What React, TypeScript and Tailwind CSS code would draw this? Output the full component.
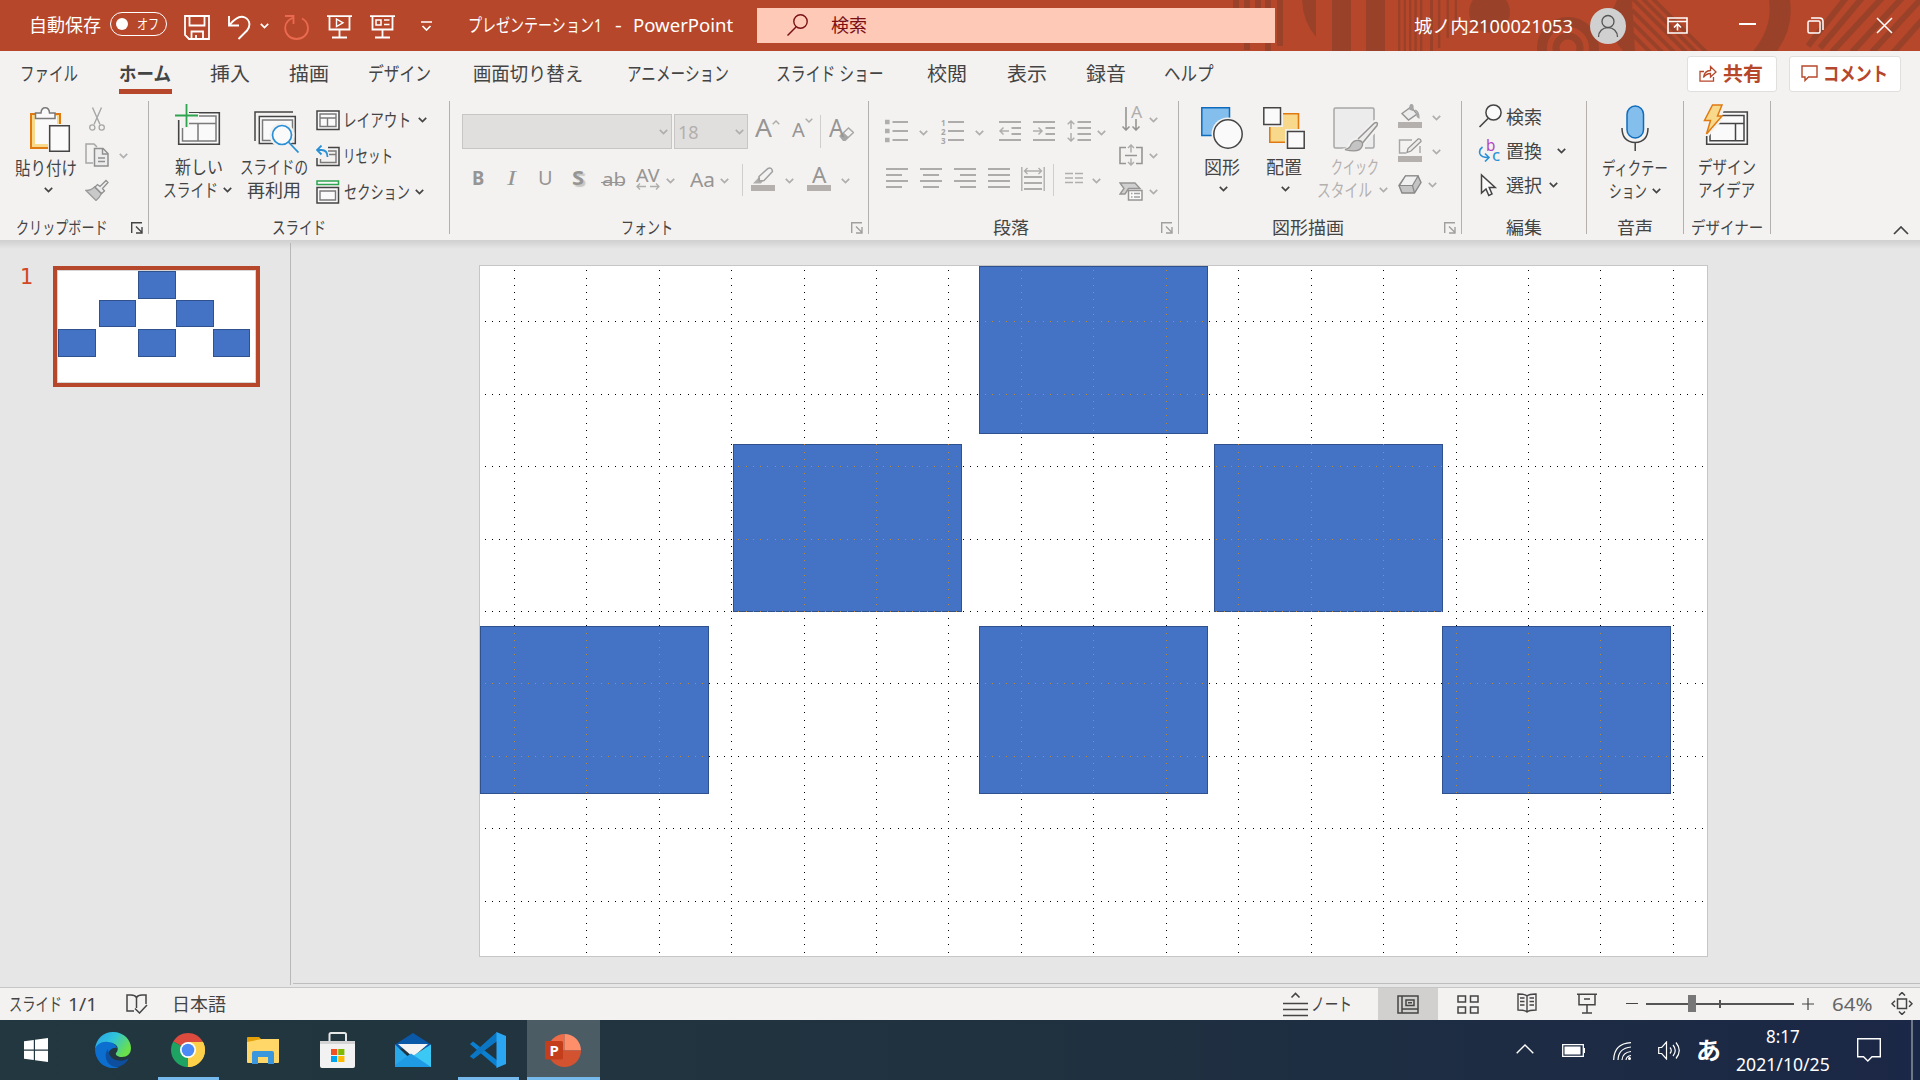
import React, { useLayoutEffect, useRef, useState } from "react";

/* Text squeezed or stretched horizontally to a given width, like the narrow kana of a UI font. */
function T({ w, className = "", children }: { w: number; className?: string; children: React.ReactNode }) {
  const ref = useRef<HTMLSpanElement>(null);
  const [scale, setScale] = useState(1);
  useLayoutEffect(() => {
    if (ref.current) setScale(w / ref.current.offsetWidth);
  }, [w]);
  return (
    <span className={"block shrink-0 whitespace-nowrap leading-none " + className} style={{ width: w }}>
      <span ref={ref} className="inline-block origin-left" style={{ transform: `scaleX(${scale})` }}>
        {children}
      </span>
    </span>
  );
}

function Ico({ w, h, className = "", children }: { w: number; h: number; className?: string; children: React.ReactNode }) {
  return (
    <svg width={w} height={h} viewBox={`0 0 ${w} ${h}`} fill="none" className={"block shrink-0 " + className}>
      {children}
    </svg>
  );
}

function Chev({ className = "text-[#444]" }: { className?: string }) {
  return (
    <Ico w={9} h={6} className={className}>
      <path d="M0.8 0.8 4.5 4.5 8.2 0.8" stroke="currentColor" strokeWidth="1.7" />
    </Ico>
  );
}

function Launcher({ className = "" }: { className?: string }) {
  return (
    <Ico w={12} h={12} className={className}>
      <path d="M.7 11V.7H11M5 4.5l5.5 5.5M11 5v6H5" stroke="currentColor" strokeWidth="1.4" />
    </Ico>
  );
}

const Divider = () => <div className="mt-[5px] h-[133px] w-px shrink-0 bg-[#b3b0ad]" />;

/* ---------- Title bar ---------- */

function TitleArt() {
  return (
    <svg className="absolute inset-0" width="1920" height="51" viewBox="0 0 1920 51">
      <g fill="#9a4229">
        <path d="M1233 0h6v8h-6zM1244 0h6v50h-6zM1255 0h6v8h-6zM1265 0h6v51h-6zM1277 0h6v46h-6z" />
        <path d="M1302 0h14v37Q1303 22 1302 0zM1332 0h19v51h-19zM1366 0h19v51h-19z" />
        <path d="M1398 0h2.4v51h-2.4zM1403.6 0h2.4v51h-2.4zM1409 0h2.4v51h-2.4zM1414.4 0h2.4v51h-2.4zM1420 0h2.4v51h-2.4zM1430 0h3v51h-3zM1438 0h2.4v48h-2.4zM1446.500 0h2.4v38h-2.4zM1454.700 0h2.4v28h-2.4z" />
        <circle cx="1489.500" cy="12" r="20.500" />
      </g>
      <circle cx="1568" cy="48" r="26" stroke="#9a4229" strokeWidth="10" fill="none" />
      <circle cx="1568" cy="48" r="12" stroke="#9a4229" strokeWidth="7" fill="none" />
      <path d="M1617 0Q1603 28 1623 51h12L1632 0z" fill="#9a4229" />
      <g stroke="#9a4229" strokeWidth="4">
        <path d="M1632-2l54 54M1642-2l54 54M1652-2l54 54M1632 10l44 44M1632 22l32 32M1632 34l20 20" />
      </g>
      <path d="M1769 0h21q4 28-13 51h-24q20-24 16-51z" fill="#9a4229" />
      <g stroke="#9a4229" strokeWidth="6">
        <path d="M1846-2l-38 48M1862-2l-42 50M1882-2l-50 54M1902-2l-50 54M1922-2l-50 54M1940 0l-48 54" />
      </g>
    </svg>
  );
}

function TitleBar() {
  return (
    <header className="relative h-[51px] shrink-0 bg-[#b7472a] text-white">
      <TitleArt />
      <div className="relative flex h-[51px] items-center">
        <T w={72} className="ml-[29px] -mt-[2px] text-[18px]">自動保存</T>
        <div className="ml-[9px] mb-[3px] flex h-6 w-[57px] shrink-0 items-center rounded-full border border-white pl-[5px]">
          <span className="h-3 w-3 rounded-full bg-white" />
          <T w={22} className="ml-[9px] text-[14px]">オフ</T>
        </div>
        <Ico w={26} h={25} className="ml-[17px] mt-[3px]">
          <path d="M1 1h24v23H5l-4-4zM5.500 1v9.500h15V1M7.500 24v-7.500h11.500V24M12 24v-4" stroke="#fff" strokeWidth="1.8" />
        </Ico>
        <Ico w={23} h={25} className="ml-[18px] mt-[3px]">
          <path d="M1 1v9.500h10M1.500 10C8 2 13 .5 17 2.500c5.500 3 5.500 9 2 13L10.500 24" stroke="#fff" strokeWidth="1.9" />
        </Ico>
        <Chev className="ml-[9px] text-white" />
        <Ico w={26} h={25} className="ml-[15px] mt-[3px]">
          <path d="M1 1h8.500v8M9.500 2.500C3 5 1 9 1.200 13.500c.3 6 5 10.500 11.300 10.500s11.500-4.500 11.500-10.500c0-4.500-2-8-6-10" stroke="#ea6a50" strokeWidth="1.8" />
        </Ico>
        <Ico w={25} h={24} className="ml-[17px] mt-[2px]">
          <path d="M0 1.200h25M2.500 1.200v13.300h20V1.200M12.500 14.500V22M5 22.500h15" stroke="#fff" strokeWidth="1.8" />
          <path d="M9.500 4l6.500 3.800-6.500 3.800z" stroke="#fff" strokeWidth="1.400" />
        </Ico>
        <Ico w={25} h={24} className="ml-[18px] mt-[2px]">
          <path d="M0 1.200h25M2.500 1.200v13.300h20V1.200M12.500 14.500V22M5 22.500h15" stroke="#fff" strokeWidth="1.8" />
          <path d="M6 5h5v5H6zM14 5h5.500M14 9.500h5.500" stroke="#fff" strokeWidth="1.500" />
        </Ico>
        <Ico w={11} h={10} className="ml-[26px]">
          <path d="M0 1h11M1.500 5l4 4 4-4" stroke="#fff" strokeWidth="1.7" />
        </Ico>
        <T w={134} className="ml-[36px] -mt-[2px] text-[18px]">プレゼンテーション1</T>
        <T w={7} className="ml-[13px] -mt-[2px] text-[18px]">-</T>
        <T w={100} className="ml-[11px] -mt-[2px] text-[18px]">PowerPoint</T>
        <div className="ml-[24px] flex h-[35px] w-[518px] shrink-0 items-center bg-[#fec9b6] text-[#7a1016]">
          <Ico w={21} h={22} className="ml-[30px] -mt-px">
            <circle cx="13.500" cy="7.500" r="6.700" stroke="currentColor" strokeWidth="1.400" />
            <path d="M9 13L.5 21.500" stroke="currentColor" strokeWidth="1.500" />
          </Ico>
          <T w={36} className="ml-[23px] -mt-[2px] text-[18px]">検索</T>
        </div>
        <T w={159} className="ml-[139px] mt-[1px] text-[18px]">城ノ内2100021053</T>
        <div className="ml-[17px] flex h-9 w-9 shrink-0 items-center justify-center rounded-full bg-[#d0d0d0]">
          <Ico w={22} h={24}>
            <circle cx="11" cy="7.500" r="6" stroke="#555" strokeWidth="1.300" />
            <path d="M1.500 23c0-5.500 4-9.300 9.500-9.300s9.500 3.800 9.500 9.300" stroke="#555" strokeWidth="1.300" />
          </Ico>
        </div>
        <Ico w={21} h={17} className="ml-[41px]">
          <path d="M1 1h19v15H1zM1 4.500h19M10.500 13.500v-6M7 10.500L10.500 7l3.500 3.500" stroke="#fff" strokeWidth="1.600" />
        </Ico>
        <div className="ml-[51px] mb-[3px] h-[1.5px] w-[17px] bg-white" />
        <Ico w={17} h={17} className="ml-[51px] -mt-px">
          <rect x="1" y="4" width="12" height="12" rx="1.500" stroke="#fff" strokeWidth="1.500" />
          <path d="M4 1h8.500Q16 1 16 4.500V13" stroke="#fff" strokeWidth="1.500" />
        </Ico>
        <Ico w={17} h={17} className="ml-[52px] -mt-px">
          <path d="M1 1l15 15M16 1L1 16" stroke="#fff" strokeWidth="1.500" />
        </Ico>
      </div>
    </header>
  );
}

/* ---------- Tabs ---------- */

function Tabs() {
  return (
    <nav className="flex h-[45px] shrink-0 items-center text-[19.5px] text-[#444]">
      <T w={58} className="ml-[20px]">ファイル</T>
      <div className="ml-[41px] flex h-[45px] w-[53px] shrink-0 flex-col">
        <T w={52} className="mt-[13px] font-bold">ホーム</T>
        <div className="mt-[5px] h-[5px] w-[53px] bg-[#b7472a]" />
      </div>
      <T w={40} className="ml-[38px]">挿入</T>
      <T w={40} className="ml-[39px]">描画</T>
      <T w={63} className="ml-[39px]">デザイン</T>
      <T w={110} className="ml-[42px]">画面切り替え</T>
      <T w={102} className="ml-[44px]">アニメーション</T>
      <T w={108} className="ml-[47px]">スライド ショー</T>
      <T w={40} className="ml-[43px]">校閲</T>
      <T w={40} className="ml-[40px]">表示</T>
      <T w={40} className="ml-[39px]">録音</T>
      <T w={50} className="ml-[38px]">ヘルプ</T>
      <button className="ml-[473px] flex h-9 w-[90px] shrink-0 items-center rounded-[3px] border border-[#e1dfdd] bg-white text-[#b7472a]">
        <Ico w={18} h={17} className="ml-[11px]">
          <path d="M5 6.500H1v9.700h13.500V12M4.500 12.500c.5-4.500 3-6.800 7-7V1.500L17 7l-5.500 5V8.500c-3 0-5 1-7 4z" stroke="currentColor" strokeWidth="1.300" />
        </Ico>
        <T w={40} className="ml-[6px] font-bold">共有</T>
      </button>
      <button className="ml-[12px] flex h-9 w-[112px] shrink-0 items-center rounded-[3px] border border-[#e1dfdd] bg-white text-[#b7472a]">
        <Ico w={17} h={17} className="ml-[11px]">
          <path d="M1 1h15v11H7.500L4 15.500V12H1z" stroke="currentColor" strokeWidth="1.400" />
        </Ico>
        <T w={65} className="ml-[5px] font-bold">コメント</T>
      </button>
    </nav>
  );
}

/* ---------- Ribbon ---------- */

function ClipboardGroup() {
  return (
    <section className="flex w-[148px] shrink-0 flex-col">
      <div className="flex h-[120px]">
        <div className="flex w-[80px] flex-col">
          <Ico w={42} h={46} className="ml-[29px] mt-[11px]">
            <path d="M2 7h29v34H2z" fill="#f8d98c" stroke="#e07a10" strokeWidth="2" />
            <path d="M6 9h22v28H6z" fill="#fafafa" />
            <path d="M6.500 11.500V6h5.500c.5-7 8-7 8.500 0H26v5.500z" fill="#fafafa" stroke="#7a7a7a" strokeWidth="1.500" />
            <path d="M19 17h23v29H19z" fill="#f3f2f1" />
            <path d="M20.700 18.700h19.600v25.600H20.700z" fill="#fafafa" stroke="#444" strokeWidth="1.500" />
          </Ico>
          <T w={62} className="ml-[15px] mt-[6px] text-[18px]">貼り付け</T>
          <Chev className="ml-[44px] mt-[10px] text-[#444]" />
        </div>
        <div className="flex flex-col text-[#a6a6a6]">
          <Ico w={16} h={24} className="ml-[9px] mt-[11px]">
            <path d="M3.500.5l7.500 17M12.500.5L5 17.500" stroke="currentColor" strokeWidth="1.400" />
            <circle cx="3.300" cy="20.500" r="2.600" stroke="currentColor" strokeWidth="1.300" />
            <circle cx="12.700" cy="20.500" r="2.600" stroke="currentColor" strokeWidth="1.300" />
          </Ico>
          <div className="ml-[5px] mt-3 flex items-center">
            <Ico w={24} h={24}>
              <path d="M8 20H1V1h8l3 3" stroke="currentColor" strokeWidth="1.500" />
              <path d="M9.500 5.500h8.500l5 5v12.500H9.500z" fill="#ececec" stroke="#8f8f8f" strokeWidth="1.500" />
              <path d="M17.500 5.500V11H23M13 15h7M13 18.500h7" stroke="#8f8f8f" strokeWidth="1.400" />
            </Ico>
            <Chev className="ml-[10px] mt-[2px] text-[#b0b0b0]" />
          </div>
          <Ico w={24} h={22} className="ml-[5px] mt-3">
            <path d="M1 11.500c3 0 6-1 8.500-3.500l7 6.500c-1.500 3-3 5-5.500 7z" fill="#c9c9c9" stroke="#9a9a9a" strokeWidth="1.300" />
            <path d="M10 8l2.500-2.500 2.500 2L21 1.500l2 2-5.500 6 2 2.500-3 2.500z" fill="#ececec" stroke="#8f8f8f" strokeWidth="1.300" />
          </Ico>
        </div>
      </div>
      <div className="flex h-6 items-center text-[17.5px]">
        <T w={92} className="ml-[16px]">クリップボード</T>
        <Launcher className="ml-[23px] text-[#444]" />
      </div>
    </section>
  );
}

function SlidesGroup() {
  return (
    <section className="flex w-[300px] shrink-0 flex-col">
      <div className="flex h-[120px] text-[18px]">
        <div className="ml-[14px] flex w-[70px] flex-col">
          <Ico w={46} h={42} className="ml-3 mt-[8px]">
            <path d="M3.700 8.700h40.600v31.600H3.700z" fill="#fafafa" stroke="#444" strokeWidth="1.600" />
            <path d="M7.500 12h33.500v25H7.500zM7.500 19.500H41M23 19.500V37" stroke="#7a7a7a" strokeWidth="1.500" />
            <path d="M0 6h10V0h4v9h10v7H14v8H6v-8H0z" fill="#f3f2f1" />
            <path d="M0 11.500h23M11.500 0v23" stroke="#2ea44f" strokeWidth="1.800" />
          </Ico>
          <T w={48} className="ml-[12px] mt-[12px]">新しい</T>
          <div className="mt-[5px] flex items-center">
            <T w={55}>スライド</T>
            <Chev className="ml-[5px] text-[#444]" />
          </div>
        </div>
        <div className="ml-[7px] flex w-[69px] flex-col">
          <Ico w={46} h={42} className="ml-[14px] mt-[15px]">
            <path d="M1 30V1h38" stroke="#444" strokeWidth="1.500" />
            <path d="M5.300 5.500h36v27h-36z" fill="#fafafa" stroke="#444" strokeWidth="1.500" />
            <path d="M8.500 9h30v20.500h-30z" stroke="#7a7a7a" strokeWidth="1.500" />
            <circle cx="28" cy="24" r="12.500" fill="#f3f2f1" />
            <circle cx="28" cy="24" r="9.500" fill="#fafafa" stroke="#2a90d6" strokeWidth="1.700" />
            <path d="M34.500 31l10 10.500" stroke="#2a90d6" strokeWidth="1.800" />
          </Ico>
          <T w={68} className="mt-[5px]">スライドの</T>
          <T w={54} className="ml-[7px] mt-[5px]">再利用</T>
        </div>
        <div className="ml-[7px] mt-[12px] flex flex-col">
          <div className="flex h-6 items-center">
            <Ico w={24} h={21}>
              <path d="M1 1h22v18.500H1z" fill="#fafafa" stroke="#444" strokeWidth="1.500" />
              <path d="M4 4h16v12.500H4zM4 8h16M11.500 8v8.500" stroke="#7a7a7a" strokeWidth="1.400" />
            </Ico>
            <T w={68} className="ml-[3px]">レイアウト</T>
            <Chev className="ml-[7px] text-[#444]" />
          </div>
          <div className="mt-3 flex h-6 items-center">
            <Ico w={24} h={22}>
              <path d="M12 2.500h11v18H1V13" stroke="#444" strokeWidth="1.500" />
              <path d="M12 6h8v11.500H4.500V14M13 9.500h7" stroke="#7a7a7a" strokeWidth="1.400" />
              <path d="M5.500.5L1 5l4.500 4.500M1 5h4.500q6 0 6 7" stroke="#2a90d6" strokeWidth="1.800" />
            </Ico>
            <T w={50} className="ml-[3px]">リセット</T>
          </div>
          <div className="mt-3 flex h-6 items-center">
            <Ico w={24} h={24}>
              <path d="M1 1h21.500v3.500H1z" fill="#fafafa" stroke="#2ea44f" strokeWidth="1.500" />
              <path d="M1 7.500h21.500V23H1z" fill="#fafafa" stroke="#444" strokeWidth="1.500" />
              <path d="M4 11h15.500v9H4z" stroke="#7a7a7a" strokeWidth="1.400" />
            </Ico>
            <T w={66} className="ml-[4px]">セクション</T>
            <Chev className="ml-[5px] text-[#444]" />
          </div>
        </div>
      </div>
      <div className="flex h-6 items-center text-[17.5px]">
        <T w={54} className="ml-[123px]">スライド</T>
      </div>
    </section>
  );
}

function FontGroup() {
  return (
    <section className="flex w-[418px] shrink-0 flex-col">
      <div className="h-[120px] text-[#979593]">
        <div className="mt-[18px] flex h-[35px] items-center">
          <div className="ml-[12px] flex h-[35px] w-[210px] shrink-0 items-center justify-end border border-[#c8c6c4] bg-[#e1dfdd] pr-[3px]">
            <Chev className="text-[#b0aeac]" />
          </div>
          <div className="ml-[2px] flex h-[35px] w-[74px] shrink-0 items-center border border-[#c8c6c4] bg-[#e1dfdd] pl-[3px]">
            <T w={21} className="text-[18px] text-[#b3b0ad]">18</T>
            <Chev className="ml-[36px] text-[#b0aeac]" />
          </div>
          <div className="ml-[7px] mb-[8px] flex w-6">
            <T w={17} className="text-[25px]">A</T>
            <Ico w={8} h={5} className="mt-[5px]"><path d="M.7 4.300L4 1l3.300 3.300" stroke="#b0aeac" strokeWidth="1.500" /></Ico>
          </div>
          <div className="ml-[13px] mb-[7px] flex w-[21px]">
            <T w={13} className="mt-[4px] text-[20px]">A</T>
            <Ico w={8} h={5} className="mt-[2px]"><path d="M.7.700L4 4l3.300-3.300" stroke="#b0aeac" strokeWidth="1.500" /></Ico>
          </div>
          <div className="ml-[7px] h-[33px] w-px bg-[#d0cecc]" />
          <div className="ml-[8px] mb-[8px] flex w-[25px]">
            <T w={15} className="text-[25px]">A</T>
            <Ico w={15} h={14} className="-ml-[5px] mt-[12px]">
              <path d="M1 9L9.500 1l5 4.500L6 13.500H4.500z" fill="#f3f2f1" stroke="#a6a6a6" strokeWidth="1.400" />
              <path d="M1 9l3.500-3.500 5 4.500L6 13.500H4.500z" fill="#a6a6a6" />
            </Ico>
          </div>
        </div>
        <div className="mt-[15px] flex h-8 items-center pb-[4px]">
          <T w={12} className="ml-[22px] text-[20px] font-bold">B</T>
          <T w={9} className="ml-[23px] font-['Liberation_Serif',serif] text-[21px] italic">I</T>
          <T w={15} className="ml-[22px] text-[20px] underline underline-offset-4">U</T>
          <T w={12} className="ml-[19px] text-[20px] font-bold [text-shadow:2px_2px_1px_#c8c6c4]">S</T>
          <div className="relative ml-[17px] mt-[1px]">
            <T w={24} className="px-[1px] text-[18px]">ab</T>
            <div className="absolute left-0 top-[12px] h-px w-6 bg-[#979593]" />
          </div>
          <div className="ml-[11px] flex w-6 flex-col">
            <T w={24} className="text-[18px]">AV</T>
            <Ico w={24} h={7} className="-mt-px"><path d="M4 .5L1 3.500l3 3M1 3.500h9M20 .5l3 3-3 3M23 3.500h-9" stroke="#b0aeac" strokeWidth="1.300" /></Ico>
          </div>
          <Chev className="ml-[6px] mt-[6px] text-[#b0aeac]" />
          <T w={25} className="ml-[15px] mt-[3px] text-[20px]">Aa</T>
          <Chev className="ml-[5px] mt-[6px] text-[#b0aeac]" />
          <div className="ml-[13px] mt-[4px] h-8 w-px shrink-0 bg-[#d0cecc]" />
          <Ico w={24} h={24} className="ml-[8px] mt-[2px]">
            <path d="M2 16.500L8 10l4 4-2 2.500z" fill="#b0aeac" />
            <path d="M8 9.500L17 1.500q4-1.500 4.500 3L13 13.500 8.500 14z" fill="#f3f2f1" stroke="#a0a0a0" strokeWidth="1.500" />
            <path d="M0 18h24v6H0z" fill="#b3b0ad" />
          </Ico>
          <Chev className="ml-[10px] mt-[6px] text-[#b0aeac]" />
          <div className="ml-[13px] mt-[2px] flex w-6 flex-col items-center">
            <T w={14} className="-mt-[2px] h-[18px] text-[21px]">A</T>
            <div className="mt-[2px] h-[6px] w-6 bg-[#b3b0ad]" />
          </div>
          <Chev className="ml-[10px] mt-[6px] text-[#b0aeac]" />
        </div>
      </div>
      <div className="flex h-6 items-center text-[17.5px]">
        <T w={52} className="ml-[171px]">フォント</T>
        <Launcher className="ml-[178px] text-[#a19f9d]" />
      </div>
    </section>
  );
}

function ParagraphGroup() {
  return (
    <section className="flex w-[309px] shrink-0 flex-col">
      <div className="flex h-[120px] text-[#979593]">
        <div className="w-[237px]">
          <div className="mt-[18px] flex h-[35px] items-center">
            <Ico w={24} h={24} className="ml-[16px] -mt-[2px]">
              <path d="M7.500 3H23M7.500 12H23M7.500 21H23" stroke="currentColor" strokeWidth="1.500" />
              <path d="M0 .7h4.600v4.600H0zM0 9.700h4.600v4.600H0zM0 18.700h4.600v4.600H0z" fill="#b0aeac" />
            </Ico>
            <Chev className="ml-[10px] mt-[3px] text-[#b0aeac]" />
            <div className="ml-[13px] -mt-px flex w-6">
              <div className="flex w-[5px] flex-col text-[8px] font-bold leading-[9px] text-[#a8a6a4]">
                <span>1</span><span>2</span><span>3</span>
              </div>
              <Ico w={16} h={24} className="ml-[2px] mt-[1px]"><path d="M0 3h16M0 12h16M0 21h16" stroke="currentColor" strokeWidth="1.500" /></Ico>
            </div>
            <Chev className="ml-[10px] mt-[3px] text-[#b0aeac]" />
            <Ico w={22} h={20} className="ml-[15px] -mt-[2px]">
              <path d="M0 1h22M12.500 7H22M12.500 13H22M0 19h22" stroke="currentColor" strokeWidth="1.500" />
              <path d="M10 10H1M4.500 6.500L1 10l3.500 3.500" stroke="#b0aeac" strokeWidth="1.500" />
            </Ico>
            <Ico w={22} h={20} className="ml-[12px] -mt-[2px]">
              <path d="M0 1h22M12.500 7H22M12.500 13H22M0 19h22" stroke="currentColor" strokeWidth="1.500" />
              <path d="M0 10h9M5.500 6.500L9 10l-3.500 3.500" stroke="#b0aeac" strokeWidth="1.500" />
            </Ico>
            <Ico w={24} h={22} className="ml-[12px] -mt-px">
              <path d="M10.500 2H24M10.500 8H24M10.500 14H24M10.500 20H24" stroke="currentColor" strokeWidth="1.500" />
              <path d="M4 9V1M.7 4.300L4 1l3.300 3.300M4 13v8M.7 17.700L4 21l3.300-3.300" stroke="#b0aeac" strokeWidth="1.500" />
            </Ico>
            <Chev className="ml-[6px] mt-[3px] text-[#b0aeac]" />
          </div>
          <div className="mt-[15px] flex h-8 items-center pb-[4px]">
            <Ico w={22} h={20} className="ml-[17px]"><path d="M0 1h22M0 7h16M0 13h22M0 19h16" stroke="currentColor" strokeWidth="1.500" /></Ico>
            <Ico w={22} h={20} className="ml-[12px]"><path d="M0 1h22M3 7h16M0 13h22M3 19h16" stroke="currentColor" strokeWidth="1.500" /></Ico>
            <Ico w={22} h={20} className="ml-[12px]"><path d="M0 1h22M6 7h16M0 13h22M6 19h16" stroke="currentColor" strokeWidth="1.500" /></Ico>
            <Ico w={22} h={20} className="ml-[12px]"><path d="M0 1h22M0 7h22M0 13h22M0 19h22" stroke="currentColor" strokeWidth="1.500" /></Ico>
            <Ico w={24} h={24} className="ml-[11px] mt-[2px]">
              <path d="M.8 0v24M23.200 0v24" stroke="#b0aeac" strokeWidth="1.400" />
              <path d="M3 10h18M3 16h18M3 22h18" stroke="currentColor" strokeWidth="1.500" />
              <path d="M3.500 4h17M6.500 1l-3 3 3 3M17.500 1l3 3-3 3" stroke="#b0aeac" strokeWidth="1.400" />
            </Ico>
            <div className="ml-[8px] mt-[4px] h-8 w-px shrink-0 bg-[#d0cecc]" />
            <Ico w={18} h={12} className="ml-[11px]"><path d="M0 1.500h8M10 1.500h8M0 6h8M10 6h8M0 10.500h8M10 10.500h8" stroke="#b0aeac" strokeWidth="1.400" /></Ico>
            <Chev className="ml-[9px] mt-[6px] text-[#b0aeac]" />
          </div>
        </div>
        <div className="ml-[13px] mt-[11px] flex flex-col">
          <div className="flex h-6 items-center">
            <div className="relative h-6 w-6">
              <Ico w={24} h={24}>
                <path d="M7 0v23M3.500 19.500L7 23l3.500-3.500M17 12v11M13.500 19.500L17 23l3.500-3.500" stroke="currentColor" strokeWidth="1.600" />
              </Ico>
              <T w={11} className="absolute left-[12px] top-[-3px] text-[16px] text-[#b0aeac]">A</T>
            </div>
            <Chev className="ml-[6px] mt-[2px] text-[#b0aeac]" />
          </div>
          <div className="mt-3 flex h-6 items-center">
            <Ico w={24} h={22} className="-mt-px">
              <path d="M7 3.500H1v16h6M17 3.500h6v16h-6" stroke="currentColor" strokeWidth="1.600" />
              <path d="M6 11.500h12" stroke="currentColor" strokeWidth="1.500" />
              <path d="M12 8.500V1M9 4l3-3 3 3M12 14.500V21M9 18l3 3 3-3" stroke="#b0aeac" strokeWidth="1.500" />
            </Ico>
            <Chev className="ml-[6px] mt-[2px] text-[#b0aeac]" />
          </div>
          <div className="mt-3 flex h-6 items-center">
            <Ico w={24} h={19}>
              <path d="M1 1h15l5 5.500H9.500L6 12H1l4-5.500z" fill="#d0d0d0" stroke="currentColor" strokeWidth="1.400" />
              <path d="M9.500 8.500H23V18H9.500z" fill="#fafafa" stroke="currentColor" strokeWidth="1.500" />
              <path d="M12 11.500h1.500M12 15h1.500M15 11.500h6M15 15h6" stroke="#a0a0a0" strokeWidth="1.300" />
            </Ico>
            <Chev className="ml-[6px] mt-[2px] text-[#b0aeac]" />
          </div>
        </div>
      </div>
      <div className="flex h-6 items-center text-[17.5px]">
        <T w={36} className="ml-[124px]">段落</T>
        <Launcher className="ml-[132px] text-[#a19f9d]" />
      </div>
    </section>
  );
}

function DrawingGroup() {
  return (
    <section className="flex w-[282px] shrink-0 flex-col">
      <div className="flex h-[120px] text-[18px]">
        <div className="ml-[22px] mt-[11px] flex w-[42px] flex-col items-center">
          <Ico w={42} h={42}>
            <path d="M.8.800h27.700v27.700H.8z" fill="#83beec" stroke="#0f6cbd" strokeWidth="1.500" />
            <circle cx="27" cy="27" r="16.500" fill="#f3f2f1" />
            <circle cx="27" cy="27" r="14.200" fill="#fafafa" stroke="#444" strokeWidth="1.500" />
          </Ico>
          <T w={36} className="mt-[9px]">図形</T>
          <Chev className="ml-[3px] mt-[10px] text-[#444]" />
        </div>
        <div className="ml-5 mt-[11px] flex w-[42px] flex-col items-center">
          <Ico w={42} h={42}>
            <path d="M6.800 6.800H35.500v28.400H6.800z" fill="#f8d98c" stroke="#e07a10" strokeWidth="1.600" />
            <path d="M0 0h20v20H0zM22 22h20v20H22z" fill="#f3f2f1" />
            <path d="M.8.800h16.700v16.700H.8zM24.500 24.500h16.700v16.700H24.500z" fill="#fafafa" stroke="#444" strokeWidth="1.500" />
          </Ico>
          <T w={36} className="mt-[9px]">配置</T>
          <Chev className="ml-[3px] mt-[10px] text-[#444]" />
        </div>
        <div className="ml-[12px] mt-[11px] flex w-[71px] flex-col text-[#b3b0ad]">
          <Ico w={46} h={45} className="ml-[16px]">
            <path d="M2.500 1h37q1.500 0 1.500 1.500v37q0 1.500-1.500 1.500h-37Q1 41 1 39.500v-37Q1 1 2.500 1z" fill="#ececec" stroke="#a6a6a6" strokeWidth="1.500" />
            <path d="M9 42q6-1 6-5 2-5 8-6L41 13l5-1v10L32 37v8H9z" fill="#f3f2f1" />
            <path d="M25 32L41.500 16q4-1.500 2.500 2.500L29.500 36" fill="#ececec" stroke="#979593" strokeWidth="1.500" />
            <path d="M12 42.500q5-1 6-5 3-5 8-4t3 6q-3 7-17 3z" fill="#c4c4c4" stroke="#979593" strokeWidth="1.300" />
          </Ico>
          <T w={48} className="ml-[14px] mt-[6px]">クイック</T>
          <div className="mt-[5px] flex items-center">
            <T w={55}>スタイル</T>
            <Chev className="ml-[7px] text-[#b0aeac]" />
          </div>
        </div>
        <div className="ml-[10px] mt-[8px] flex flex-col">
          <div className="flex h-6 items-center">
            <Ico w={24} h={24}>
              <path d="M4 9.500L13 3l6 7-8.500 6z" fill="#ececec" stroke="#979593" strokeWidth="1.400" />
              <path d="M12 6V2q1.500-3 3 0v5M17 6q4 1 4 8-3-1-2-5" fill="#a6a6a6" stroke="#a6a6a6" strokeWidth="1.200" />
              <path d="M0 18h24v6H0z" fill="#b3b0ad" />
            </Ico>
            <Chev className="ml-[10px] mt-[3px] text-[#b0aeac]" />
          </div>
          <div className="mt-[10px] flex h-6 items-center">
            <Ico w={24} h={24}>
              <path d="M14 2H1.500v13H8M22 8v7" stroke="#a6a6a6" strokeWidth="1.400" />
              <path d="M9 14.500l1-4L20 1q3-.5 3 2.500L13 13z" fill="#ececec" stroke="#979593" strokeWidth="1.300" />
              <path d="M0 18h24v6H0z" fill="#b3b0ad" />
            </Ico>
            <Chev className="ml-[10px] mt-[4px] text-[#b0aeac]" />
          </div>
          <div className="mt-[10px] flex h-6 items-center">
            <Ico w={24} h={19}>
              <path d="M1 10.500L7.500 1H20l3 6.500L16.500 18H4z" fill="#c4c4c4" stroke="#888" strokeWidth="1.400" />
              <path d="M1.500 10.500L7.500 1H20l-5.500 9.500z" fill="#f0f0f0" stroke="#888" strokeWidth="1.200" />
              <path d="M14.500 10.500L16.500 18" stroke="#888" strokeWidth="1.200" />
            </Ico>
            <Chev className="ml-[6px] mt-[2px] text-[#b0aeac]" />
          </div>
        </div>
      </div>
      <div className="flex h-6 items-center text-[17.5px]">
        <T w={72} className="ml-[93px]">図形描画</T>
        <Launcher className="ml-[100px] text-[#a19f9d]" />
      </div>
    </section>
  );
}

function EditingGroup() {
  return (
    <section className="flex w-[124px] shrink-0 flex-col">
      <div className="flex h-[120px] flex-col gap-[10px] pt-[8px] text-[18px]">
        <div className="flex h-6 items-center">
          <Ico w={24} h={24} className="ml-[16px]">
            <circle cx="15.500" cy="8.500" r="7.600" fill="#fafafa" stroke="#444" strokeWidth="1.500" />
            <path d="M10 14.500L1.500 23" stroke="#444" strokeWidth="1.600" />
          </Ico>
          <T w={36} className="ml-[4px] mt-[1px]">検索</T>
        </div>
        <div className="flex h-6 items-center">
          <div className="relative ml-[16px] h-6 w-6">
            <Ico w={24} h={24}>
              <path d="M4.500 9q-4 3-2.500 7 1.500 3.500 8 3.500M7 15.500l4 4-4 4" stroke="#2a90d6" strokeWidth="1.600" />
            </Ico>
            <T w={9} className="absolute left-[8px] top-[-2px] text-[17px] text-[#b146c2]">b</T>
            <T w={8} className="absolute left-[14px] top-[8px] text-[17px] text-[#2a90d6]">c</T>
          </div>
          <T w={36} className="ml-[4px] mt-[1px]">置換</T>
          <Chev className="ml-[15px] mt-[2px] text-[#444]" />
        </div>
        <div className="flex h-6 items-center">
          <Ico w={24} h={24} className="ml-[16px] mt-[2px]">
            <path d="M3.500 2v18l4.500-4 2.800 6.500 3.200-1.500L11.200 14.500h6z" fill="#fafafa" stroke="#444" strokeWidth="1.500" />
          </Ico>
          <T w={36} className="ml-[4px] mt-[1px]">選択</T>
          <Chev className="ml-[7px] mt-[2px] text-[#444]" />
        </div>
      </div>
      <div className="flex h-6 items-center text-[17.5px]">
        <T w={36} className="ml-[44px]">編集</T>
      </div>
    </section>
  );
}

function VoiceGroup() {
  return (
    <section className="flex w-[96px] shrink-0 flex-col items-center">
      <div className="flex h-[120px] flex-col items-center text-[18px]">
        <Ico w={28} h={46} className="mt-[9px]">
          <rect x="6" y="1" width="16.500" height="32" rx="8.250" fill="#83beec" stroke="#0f6cbd" strokeWidth="1.500" />
          <path d="M1 23q0 14 13.200 14.500Q27 37 27 23M14.200 37.500V46" stroke="#444" strokeWidth="1.500" />
        </Ico>
        <T w={66} className="mt-[8px]">ディクテー</T>
        <div className="mt-[5px] flex items-center">
          <T w={38}>ション</T>
          <Chev className="ml-[5px] text-[#444]" />
        </div>
      </div>
      <div className="flex h-6 items-center text-[17.5px]">
        <T w={36}>音声</T>
      </div>
    </section>
  );
}

function DesignerGroup() {
  return (
    <section className="flex w-[86px] shrink-0 flex-col items-center">
      <div className="flex h-[120px] flex-col items-center pr-px text-[18px]">
        <Ico w={46} h={42} className="mr-[2px] mt-[8px]">
          <path d="M3.700 8h40.600v32.300H3.700z" fill="#fafafa" stroke="#444" strokeWidth="1.600" />
          <path d="M7 11.500h34v25.300H7zM7 19.500h34M32.500 19.500v17" stroke="#444" strokeWidth="1.500" />
          <path d="M2 6h19l-3 8h3L6 32H0z" fill="#f3f2f1" />
          <path d="M9.500 1H19l-4.500 11H19L3.500 30l4-13.500h-6z" fill="#f8d98c" stroke="#e07a10" strokeWidth="1.500" />
        </Ico>
        <T w={58} className="mt-[12px]">デザイン</T>
        <T w={57} className="mt-[5px]">アイデア</T>
      </div>
      <div className="flex h-6 items-center text-[17.5px]">
        <T w={72}>デザイナー</T>
      </div>
    </section>
  );
}

function Ribbon() {
  return (
    <div className="flex h-[144px] shrink-0">
      <ClipboardGroup />
      <Divider />
      <SlidesGroup />
      <Divider />
      <FontGroup />
      <Divider />
      <ParagraphGroup />
      <Divider />
      <DrawingGroup />
      <Divider />
      <EditingGroup />
      <Divider />
      <VoiceGroup />
      <Divider />
      <DesignerGroup />
      <Divider />
      <Ico w={16} h={9} className="ml-[122px] mt-[130px]">
        <path d="M1 8l7-7 7 7" stroke="#444" strokeWidth="1.700" />
      </Ico>
    </div>
  );
}

/* ---------- Slide workspace ---------- */

const SLIDE = { x: 480, y: 266, w: 1227, h: 690 };
const SHAPE = { w: 229, h: 168 };
const SHAPES = [
  [979, 266],
  [733, 444],
  [1214, 444],
  [480, 626],
  [979, 626],
  [1442, 626],
];

/* Dotted guide grid: fine dots along every tenth grid step. */
function gridPaths() {
  let dark = "";
  let light = "";
  const put = (x: number, y: number) => {
    if (x < SLIDE.x || x >= SLIDE.x + SLIDE.w || y < SLIDE.y || y >= SLIDE.y + SLIDE.h) return;
    const inside = SHAPES.some(([sx, sy]) => x >= sx && x < sx + SHAPE.w && y >= sy && y < sy + SHAPE.h);
    const d = `M${x - SLIDE.x} ${y - SLIDE.y}h1v1h-1z`;
    if (inside) light += d;
    else dark += d;
  };
  const gx = (k: number) => Math.round(948.4 + 7.245 * k);
  const gy = (k: number) => Math.round(321.2 + 7.245 * k);
  for (let i = -6; i <= 10; i++) for (let k = -7; k < 92; k++) put(gx(i * 10), gy(k));
  for (let j = 0; j <= 8; j++) for (let k = -64; k < 106; k++) if (k % 10 !== 0) put(gx(k), gy(j * 10));
  return { dark, light };
}

function Thumbnail() {
  return (
    <div className="relative h-[121px] w-[207px] border-4 border-[#b7472a] bg-white">
      <div className="absolute inset-0 border border-[#d6d6d6]" />
      <div className="absolute left-[81px] top-[1px] h-[28px] w-[38px] border border-[#2f528f] bg-[#4472c4]" />
      <div className="absolute left-[42px] top-[30px] h-[27px] w-[37px] border border-[#2f528f] bg-[#4472c4]" />
      <div className="absolute left-[119px] top-[30px] h-[27px] w-[38px] border border-[#2f528f] bg-[#4472c4]" />
      <div className="absolute left-[1px] top-[59px] h-[28px] w-[38px] border border-[#2f528f] bg-[#4472c4]" />
      <div className="absolute left-[81px] top-[59px] h-[28px] w-[38px] border border-[#2f528f] bg-[#4472c4]" />
      <div className="absolute left-[156px] top-[59px] h-[28px] w-[37px] border border-[#2f528f] bg-[#4472c4]" />
    </div>
  );
}

function Workspace() {
  const { dark, light } = gridPaths();
  return (
    <main className="relative flex h-[747px] shrink-0 bg-[#e6e6e6]">
      <div className="absolute inset-x-0 top-0 h-[9px] bg-gradient-to-b from-[#cfcfcf] to-[#e6e6e6]" />
      <aside className="flex w-[290px] shrink-0 items-start">
        <T w={13} className="ml-[20px] mt-[27px] font-['DejaVu_Sans',sans-serif] text-[21px] text-[#d24726]">1</T>
        <div className="ml-[20px] mt-[26px]">
          <Thumbnail />
        </div>
      </aside>
      <div className="relative mt-[3px] h-[742px] w-px shrink-0 bg-[#b8b8b8]" />
      <div className="flex flex-1 flex-col pl-[2px]">
        <div className="ml-[186px] mt-[25px] h-[692px] w-[1229px] border border-[#c6c6c6] bg-white">
          <div className="relative h-[690px] w-[1227px]">
            {SHAPES.map(([x, y], i) => (
              <div
                key={i}
                className="absolute h-[168px] w-[229px] border border-[#2f528f] bg-[#4472c4]"
                style={{ left: x - SLIDE.x, top: y - SLIDE.y }}
              />
            ))}
            <svg className="absolute inset-0" width="1227" height="690" shapeRendering="crispEdges">
              <path d={dark} fill="#000" />
              <path d={light} fill="#bb8d3b" />
            </svg>
          </div>
        </div>
        <div className="mt-[26px] h-px bg-[#bdbdbd]" />
      </div>
    </main>
  );
}

/* ---------- Status bar ---------- */

function StatusBar() {
  return (
    <footer className="flex h-[33px] shrink-0 items-center border-t border-[#c6c6c6] bg-[#f3f2f1] text-[18px] text-[#444]">
      <div className="ml-[9px] flex shrink-0">
        <T w={53}>スライド</T>
        <T w={29} className="ml-[6px]">1/1</T>
      </div>
      <Ico w={22} h={20} className="ml-[29px]">
        <path d="M10.500 3.500Q9 1 5 1H1v16h7M10.500 3.500Q12 1 16 1h4v9M10.500 3.500V14M9 14.500l4.500 4.500L21 11" stroke="#444" strokeWidth="1.500" />
      </Ico>
      <T w={54} className="ml-[24px]">日本語</T>
      <Ico w={25} h={25} className="ml-[1057px]">
        <path d="M0 11.500h25M0 17.500h25M0 23.500h25M8.500 5.500l4-4 4 4" stroke="#444" strokeWidth="1.600" />
      </Ico>
      <T w={41} className="ml-[3px]">ノート</T>
      <div className="ml-[26px] flex h-8 w-[60px] shrink-0 items-center justify-center bg-[#d2d0ce]">
        <Ico w={22} h={19}>
          <path d="M1 1h20v17H1zM5 1v17M5 14h16M9 5h8v5.500H9zM11 7.700h4" stroke="#444" strokeWidth="1.500" />
        </Ico>
      </div>
      <Ico w={22} h={19} className="ml-[19px]">
        <path d="M1 1h7.500v6H1zM13.500 1H21v6h-7.500zM1 12h7.500v6H1zM13.500 12H21v6h-7.500z" stroke="#444" strokeWidth="1.500" />
      </Ico>
      <Ico w={20} h={20} className="ml-[38px] -mt-[2px]">
        <path d="M10 3Q8 1 1 1v16q7 0 9 2 2-2 9-2V1q-7 0-9 2zM10 3v16M3 5h4.500M3 8.500h4.500M3 12h4.500M12.500 5H17M12.500 8.500H17M12.500 12H17" stroke="#444" strokeWidth="1.400" />
      </Ico>
      <Ico w={20} h={21} className="ml-[40px] -mt-[2px]">
        <path d="M0 1.200h20M2 1.200v10.500h16V1.200M10 11.700V20M5 20h10M7 6h6" stroke="#444" strokeWidth="1.500" />
      </Ico>
      <div className="ml-[29px] mb-px h-px w-[12px] bg-[#444]" />
      <div className="relative ml-[8px] h-[2px] w-[148px] shrink-0 bg-[#555]">
        <div className="absolute left-[42px] top-[-8px] h-[17px] w-[8px] bg-[#777]" />
        <div className="absolute left-[73px] top-[-3px] h-2 w-[2px] bg-[#555]" />
      </div>
      <Ico w={12} h={12} className="ml-[8px] mb-px">
        <path d="M6 0v12M0 6h12" stroke="#444" strokeWidth="1.200" />
      </Ico>
      <T w={41} className="ml-[18px] text-[#666]">64%</T>
      <Ico w={22} h={23} className="ml-[18px] -mt-px">
        <path d="M6.500 7h9v9.500h-9zM8 3.500l3-3 3 3M8 19.500l3 3 3-3M4 8.700L1 11.700l3 3M18 8.700l3 3-3 3" stroke="#444" strokeWidth="1.500" />
      </Ico>
    </footer>
  );
}

/* ---------- Taskbar ---------- */

function Taskbar() {
  return (
    <div className="flex h-[60px] shrink-0 items-center bg-gradient-to-r from-[#22373f] via-[#20323f] to-[#1b2746] text-white">
      <Ico w={24} h={24} className="ml-[24px]">
        <path d="M0 3.300L9.800 2v9.500H0zM11 1.800L24 0v11.500H11zM0 12.700h9.800V22L0 20.700zM11 12.700h13V24l-13-1.800z" fill="#fff" />
      </Ico>
      <svg width="36" height="36" viewBox="0 0 36 36" className="ml-[47px] shrink-0">
        <defs>
          <linearGradient id="edgeTop" x1="0" y1="0" x2="1" y2="0.500">
            <stop offset="0" stopColor="#2ba0ea" />
            <stop offset="0.500" stopColor="#2fc3dc" />
            <stop offset="1" stopColor="#6ae04a" />
          </linearGradient>
        </defs>
        <path d="M0 17C1 7 8 0 18 0c11 0 18 8 18 16 0 6-4 9-9 9-4 0-7-2-6-4 4-4 1-10-6-10C8 11 2 13 0 17z" fill="url(#edgeTop)" />
        <path d="M0 17c2-5 7-8 13-7 5 0 8 3 9 6-4-1-9 2-9 8 0 6 5 11 11 11-2 1-4 1-6 1C8 36 0 28 0 17z" fill="#0c6fd0" />
        <path d="M13 17c-4 5-3 13 4 17 7 3 14-2 17-8-4 3-12 4-17 0-3-3-4-6-4-9z" fill="#0d4f9e" />
      </svg>
      <div className="ml-[27px] flex h-[60px] w-[61px] shrink-0 flex-col items-center justify-between">
        <svg width="34" height="34" viewBox="0 0 34 34" className="mr-[2px] mt-[13px]">
          <path d="M17 17L2.300 8.500A17 17 0 0 1 31.700 8.500z" fill="#dd4b3e" />
          <path d="M17 17L31.700 8.500A17 17 0 0 1 17 34z" fill="#fdd04a" />
          <path d="M17 17L17 34A17 17 0 0 1 2.300 8.500z" fill="#1ea362" />
          <path d="M17 9h14.900A17 17 0 0 1 16.500 34L24 21z" fill="#fdd04a" />
          <circle cx="17" cy="17" r="8" fill="#fff" />
          <circle cx="17" cy="17" r="6.300" fill="#4c8bf5" />
        </svg>
        <div className="h-[3px] w-full bg-[#76b9ed]" />
      </div>
      <Ico w={32} h={27} className="ml-[28px]">
        <path d="M0 1q0-1 1-1h11l3 3v3H0z" fill="#e3a008" />
        <path d="M0 5l15-3h17v23q0 1-1 1H1q-1 0-1-1z" fill="#ffd768" />
        <path d="M5 27V16q0-2 2-2h18q2 0 2 2v11h-6v-7H11v7z" fill="#3a96dd" />
      </Ico>
      <Ico w={35} h={36} className="ml-[41px]">
        <path d="M9.500 11V2.500Q9.500 1 11 1h13.500q1.500 0 1.500 1.500V11" stroke="#e6e6e6" strokeWidth="2" />
        <path d="M0 9h35v25q0 2-2 2H2q-2 0-2-2z" fill="#f2f2f2" />
        <path d="M0 9h35v3H0z" fill="#d4d4d4" />
        <path d="M11 17h6.200v6H11z" fill="#f25022" />
        <path d="M18.200 17h6.200v6h-6.200z" fill="#7fba00" />
        <path d="M11 24h6.200v6H11z" fill="#00a4ef" />
        <path d="M18.200 24h6.200v6h-6.200z" fill="#ffb900" />
      </Ico>
      <Ico w={36} h={34} className="ml-[40px]">
        <path d="M0 11.500L18 0l18 11.500v4H0z" fill="#0a58a8" />
        <path d="M3 11h30L18 24z" fill="#f4f4f4" />
        <path d="M0 11.500L24 34H0z" fill="#29a8ea" />
        <path d="M36 11.500V34H24L16 24z" fill="#3cc8f4" />
        <path d="M16 20.500L36 34H0V32z" fill="#1f9be6" />
      </Ico>
      <div className="ml-[27px] flex h-[60px] w-[61px] shrink-0 flex-col items-center justify-between">
        <Ico w={36} h={36} className="mr-[2px] mt-[12px]">
          <path d="M0 12l3-2.500L28 29v7z" fill="#0b7fd0" />
          <path d="M0 24l3 2.500L27 9V0z" fill="#0a69b5" />
          <path d="M0 24.500L27 0v9L3.500 27z" fill="#0b76c4" />
          <path d="M26.500 0L36 4v28l-9.500 4z" fill="#2aa6f2" />
        </Ico>
        <div className="h-[3px] w-full bg-[#76b9ed]" />
      </div>
      <div className="ml-[8px] flex h-[60px] w-[73px] shrink-0 flex-col items-center justify-between bg-[#4b5c65]">
        <div className="relative mr-[2px] mt-[14px] h-[33px] w-[36px]">
          <Ico w={36} h={33}>
            <path d="M19.500 0A16.500 16.500 0 0 0 3 16.500h16.500z" fill="#ed6c47" />
            <path d="M19.500 0A16.500 16.500 0 0 1 36 16.500H19.500z" fill="#ff8f6b" />
            <path d="M3 16.500h33a16.500 16.500 0 0 1-33 0z" fill="#d35230" />
            <rect x="0" y="7" width="18" height="18.500" rx="1.500" fill="#c43e1c" />
          </Ico>
          <T w={9} className="absolute left-[5px] top-[9px] text-[15px] font-bold">P</T>
        </div>
        <div className="h-[3px] w-full bg-[#76b9ed]" />
      </div>
      <Ico w={18} h={10} className="ml-[916px] -mt-[2px]">
        <path d="M.7 9.300L9 1l8.300 8.300" stroke="#fff" strokeWidth="1.400" />
      </Ico>
      <Ico w={23} h={13} className="ml-[28px]">
        <path d="M.7.700h20.600v11.600H.7z" stroke="#fff" strokeWidth="1.300" />
        <path d="M2.500 2.500h16v8h-16zM21.500 4H23v5h-1.500z" fill="#fff" />
      </Ico>
      <Ico w={18} h={18} className="ml-[28px] mt-[2px]">
        <path d="M.7 18Q1 1.500 18 .7M5 18Q5.500 6 18 5M9 18Q9.500 10.500 18 9.500M13 18q.5-4 5-4.500" stroke="#fff" strokeWidth="1.200" />
        <circle cx="16.500" cy="16.500" r="1.500" fill="#fff" />
      </Ico>
      <Ico w={22} h={19} className="ml-[27px]">
        <path d="M.7 6.500h3L8.500 1v17l-4.800-5.500h-3zM12 6.500q2.500 3 0 6M15 4q4.500 5.500 0 11M18 1.500q6.500 8 0 16" stroke="#fff" strokeWidth="1.200" />
      </Ico>
      <T w={25} className="ml-[16px] text-[24px] font-bold">あ</T>
      <div className="ml-[15px] flex w-[94px] flex-col items-center text-[18px]">
        <T w={34}>8:17</T>
        <T w={94} className="mt-[10px]">2021/10/25</T>
      </div>
      <Ico w={24} h={24} className="ml-[27px]">
        <path d="M.7.700h22.600v18H15l-4.200 4.300-4.300-4.300H.7z" stroke="#fff" strokeWidth="1.400" />
      </Ico>
      <div className="ml-[30px] h-[60px] w-[2px] bg-[#6d7788]" />
    </div>
  );
}

export default function App() {
  return (
    <div className="flex h-[1080px] w-[1920px] flex-col overflow-hidden bg-[#f3f2f1] font-['Noto_Sans','Noto_Sans_CJK_JP',sans-serif] text-[#444]">
      <TitleBar />
      <Tabs />
      <Ribbon />
      <Workspace />
      <StatusBar />
      <Taskbar />
    </div>
  );
}
